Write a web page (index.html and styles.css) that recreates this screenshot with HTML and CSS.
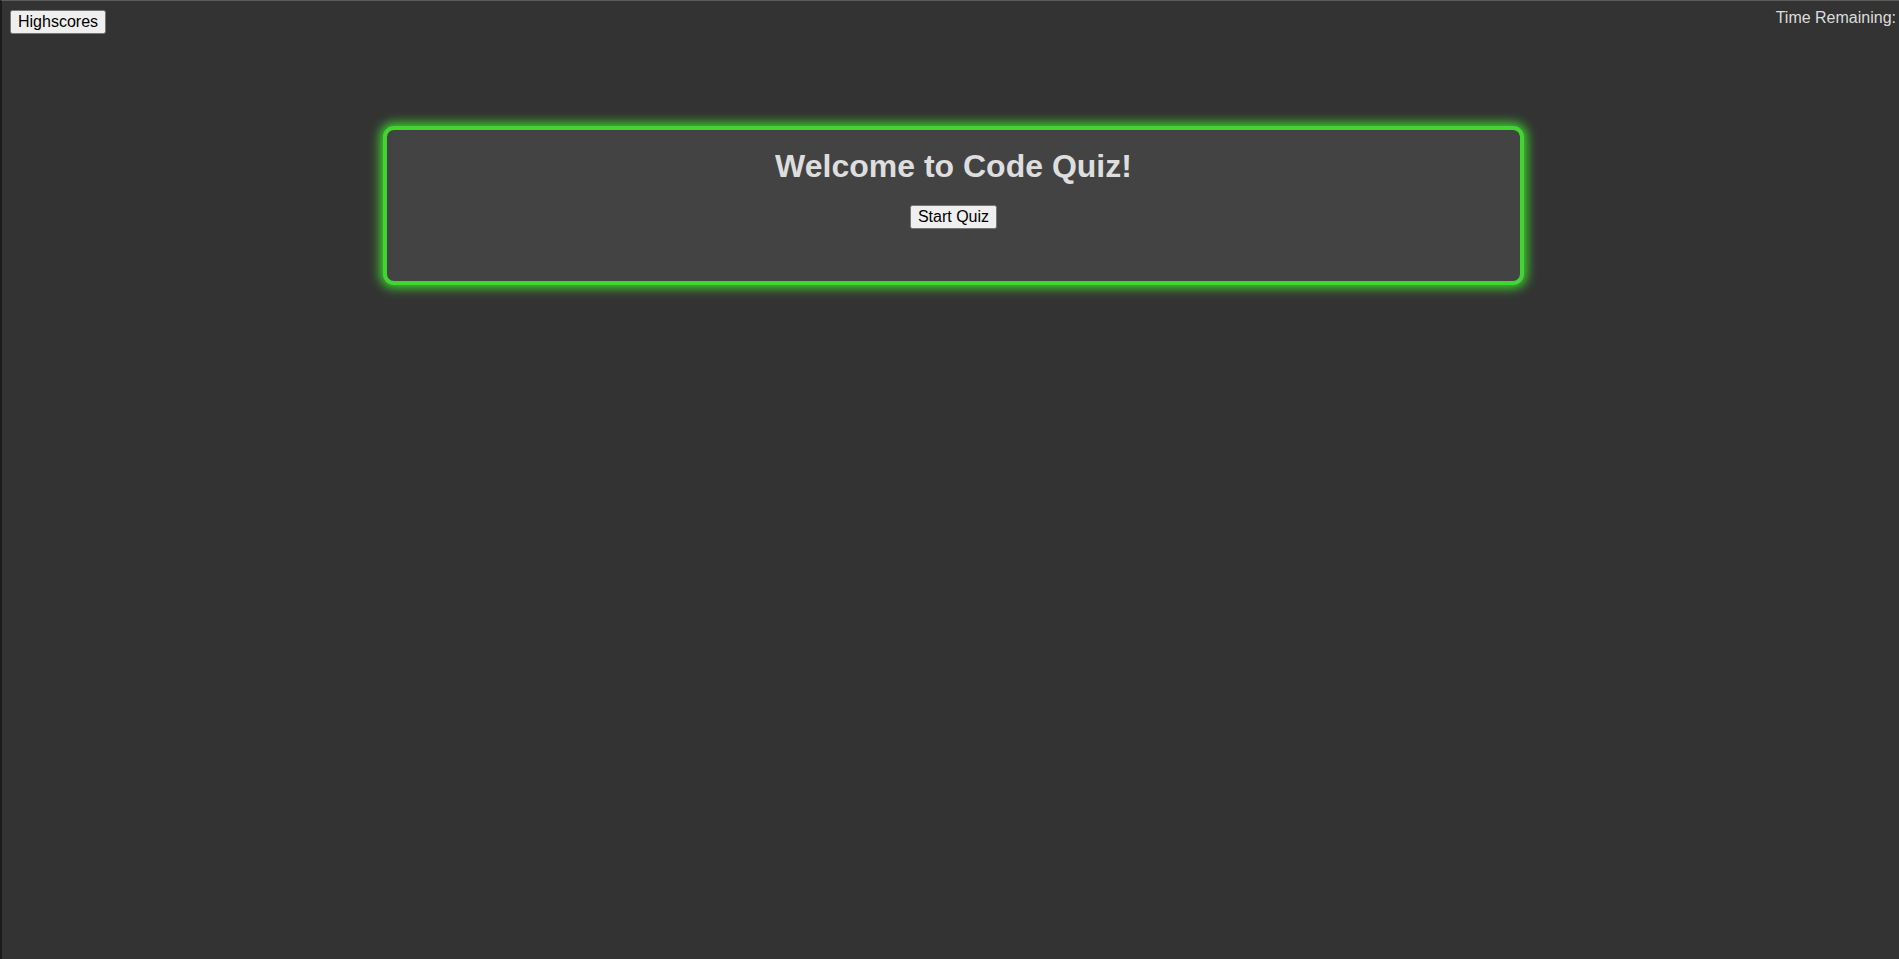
FILE: index.html
```html
<!DOCTYPE html>
<html lang="en">
<head>
<meta charset="utf-8">
<title>Code Quiz</title>
<link rel="stylesheet" href="styles.css">
</head>
<body>
<span class="edge-mark mark-a"></span>
<span class="edge-mark mark-b"></span>
<header class="top-bar">
  <button class="btn btn-highscores" type="button">Highscores</button>
  <div class="timer">Time Remaining: <span class="timer-value"></span></div>
</header>
<main class="stage">
  <section class="card">
    <h1 class="card-title">Welcome to Code Quiz!</h1>
    <button class="btn btn-start" type="button">Start Quiz</button>
  </section>
</main>
</body>
</html>
```
FILE: styles.css
```css
html, body {
  height: 100%;
}
html {
  background: #333333;
}
body {
  margin: 0;
  min-height: 958px;
  box-sizing: border-box;
  background: #333333;
  border-top: 1px solid #5c5c5c;
  border-left: 2px solid #1b1b1f;
  font-family: "Liberation Sans", Arial, sans-serif;
  color: #dddddd;
  overflow: hidden;
  position: relative;
}
.edge-mark {
  position: absolute;
  left: -2px;
  width: 2px;
  height: 2px;
  background: #5aa0e0;
}
.mark-a { top: 60px; }
.mark-b { top: 234px; }

.top-bar {
  display: flex;
  justify-content: space-between;
  align-items: flex-start;
}
.btn {
  font-family: "Liberation Sans", Arial, sans-serif;
  font-size: 16px;
}
.btn-highscores {
  margin: 9px 0 0 8px;
}
.timer {
  font-size: 16px;
  padding-top: 8px;
  padding-right: 3px;
  color: #dddddd;
  white-space: nowrap;
}

.stage {
  display: flex;
  justify-content: center;
  padding-left: 6px;
  padding-top: 92px;
}
.card {
  box-sizing: border-box;
  width: 1141px;
  height: 159px;
  background: #434343;
  border: 4px solid #40d830;
  border-radius: 11px;
  box-shadow: 0 0 11px 3px #3ed62e;
  padding: 18px 0 0;
  display: flex;
  flex-direction: column;
  align-items: center;
}
.card-title {
  margin: 0 0 20px;
  font-size: 32px;
  font-weight: bold;
  color: #dedede;
  line-height: 37px;
}
```
